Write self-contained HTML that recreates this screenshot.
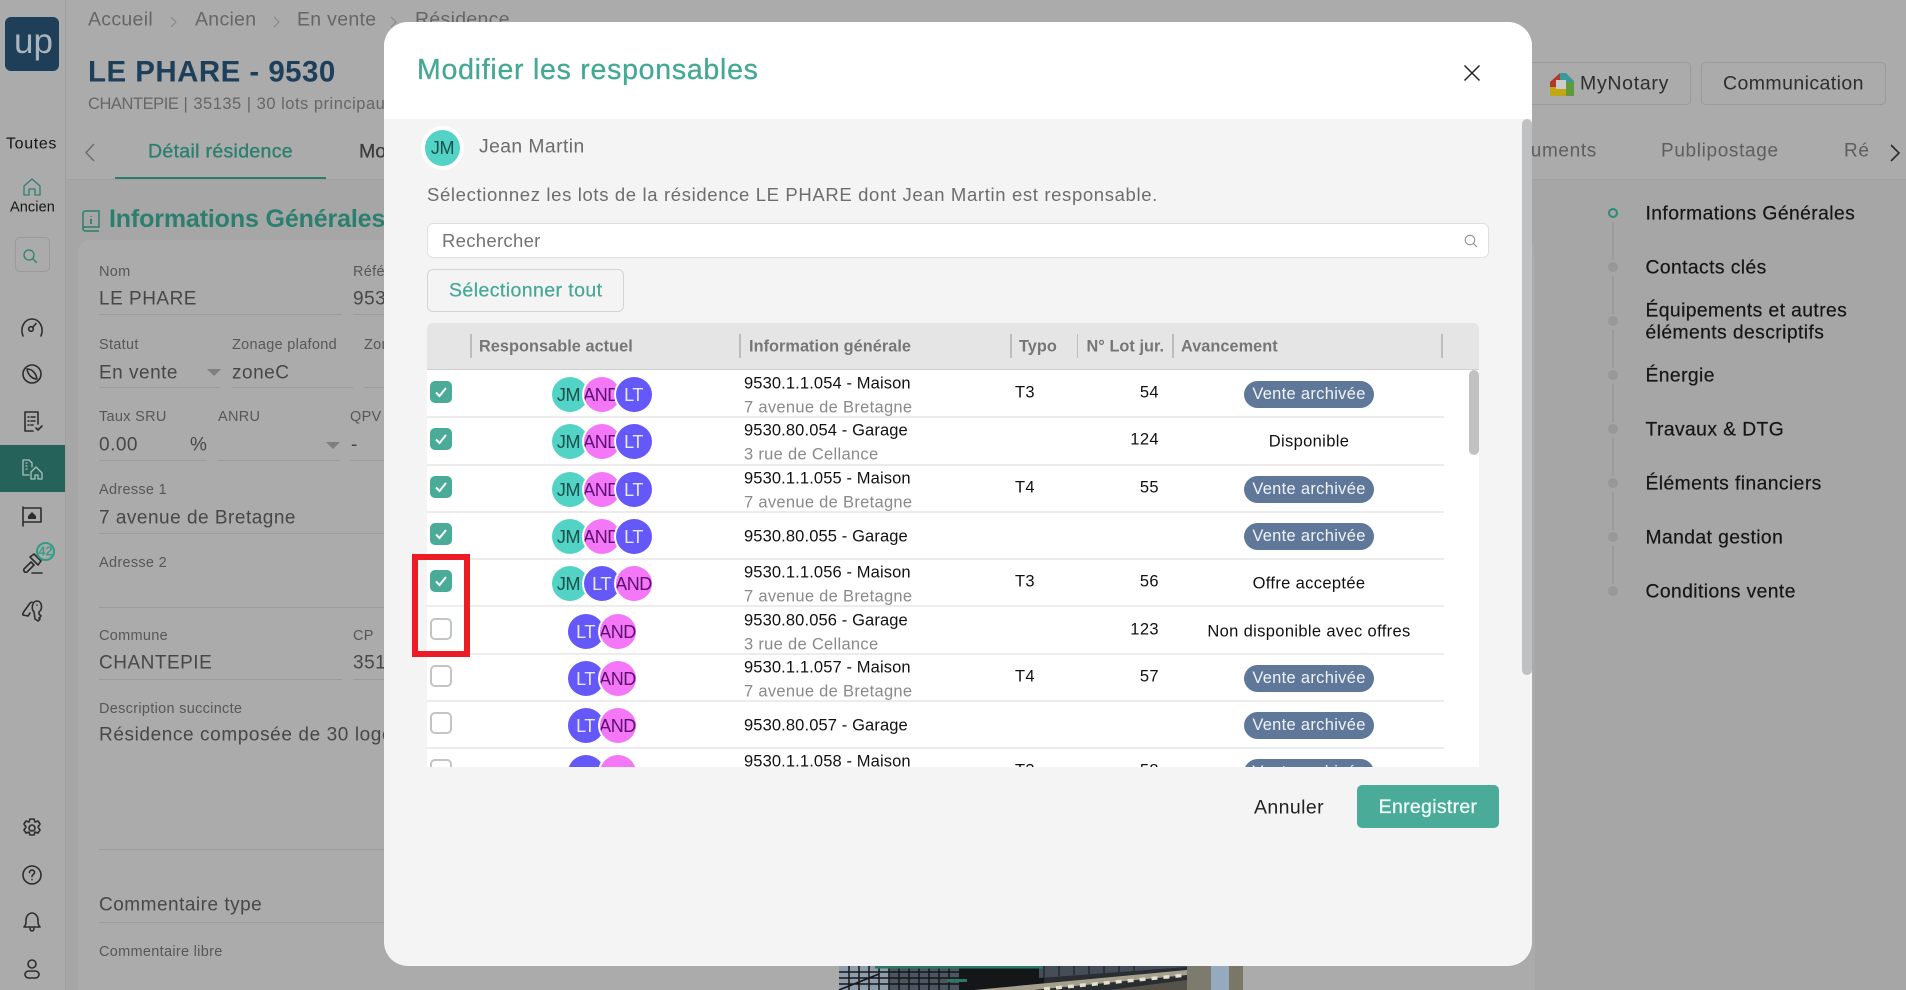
<!DOCTYPE html>
<html lang="fr"><head><meta charset="utf-8"><title>Modifier les responsables</title>
<style>
html,body{margin:0;padding:0}
body{width:1906px;height:990px;overflow:hidden;position:relative;background:#ababab;font-family:"Liberation Sans",sans-serif;color:#333}
.t{position:absolute;white-space:nowrap;transform:translateY(-50%);line-height:1.2}
.b{position:absolute}
.l{position:absolute;height:1px;background:#9c9c9c}
.lab{font-size:14.5px;color:#575757;letter-spacing:.3px;transform:translateY(calc(-50% + 1.5px))}
.val{font-size:19px;color:#474747;letter-spacing:.5px;transform:translateY(calc(-50% + 2px))}
.nav{font-size:19.3px;color:#151515;left:1645.5px;letter-spacing:.42px;-webkit-text-stroke:.2px #151515;transform:translateY(calc(-50% + 1px))}
.dot{position:absolute;left:1608px;width:10px;height:10px;border-radius:50%;background:#989898}
.vl{position:absolute;left:1612px;width:2px;height:38px;background:#9b9b9b}
svg{position:absolute;overflow:visible}
.i{fill:none;stroke:#2d2d2d;stroke-width:1.6;stroke-linecap:round;stroke-linejoin:round}
.row{position:absolute;left:0;width:1017px;height:47.3px;border-bottom:0}
.rl{position:absolute;left:0;width:1017px;height:2px;background:#ececec;bottom:-1px}
.cb{position:absolute;left:3px;width:22px;height:22px;border-radius:5px;box-sizing:border-box}
.on{background:#4aab98}
.off{background:#fff;border:2px solid #c4c4c4}
.cb svg{left:0;top:0}
.av{position:absolute;top:7px;width:36px;height:35px;border-radius:50%;box-shadow:0 0 0 2px #fff;overflow:hidden;text-align:center;line-height:36px;font-size:18px;letter-spacing:-.4px}
.jm{background:#52d3c5;color:#1a4f4b;text-indent:-3px}
.an{background:#f477f8;color:#5c0f6e;text-indent:-1px}
.lt{background:#6558f8;color:#e9e8ff;text-indent:-1px}
.m{position:absolute;left:317px;top:14px;font-size:16.5px;color:#111;white-space:nowrap;transform:translateY(-50%);letter-spacing:.12px}
.s{position:absolute;left:317px;top:38px;font-size:16.5px;color:#8a8a8a;white-space:nowrap;transform:translateY(-50%);letter-spacing:.3px}
.o{position:absolute;left:317px;top:25px;font-size:16.5px;color:#111;white-space:nowrap;transform:translateY(-50%);letter-spacing:.12px}
.ty{position:absolute;left:588px;top:23px;font-size:16.5px;color:#111;transform:translateY(-50%);letter-spacing:.3px}
.nu{position:absolute;right:285px;top:23px;font-size:16.5px;color:#111;transform:translateY(-50%);letter-spacing:.4px}
.pi{position:absolute;left:817px;top:11px;width:130px;height:27px;border-radius:14px;background:#5f7799;color:#f0f3f7;text-align:center;line-height:27.5px;font-size:16.5px;letter-spacing:.3px}
.st{position:absolute;left:717px;width:330px;top:25px;text-align:center;font-size:16.5px;color:#111;transform:translateY(-50%);letter-spacing:.35px}
.th{position:absolute;top:347px;transform:translateY(-50%);font-size:16.3px;font-weight:bold;color:#767676;white-space:nowrap;letter-spacing:.05px}
.sep{position:absolute;top:334px;width:2px;height:24px;background:#bdbdbd}
.bc{font-size:19.5px;color:#666;letter-spacing:.3px;top:20px}
</style></head><body>

<!-- background page -->
<div class="b" style="left:66px;top:180px;width:1840px;height:810px;background:#a6a6a6"></div>
<div class="b" style="left:65px;top:0;width:1px;height:990px;background:#9f9f9f"></div>
<div class="b" style="left:78px;top:240px;width:1457px;height:750px;background:#ababab;border-radius:12px 12px 0 0"></div>
<div class="b" style="left:1535px;top:180px;width:371px;height:810px;background:#a6a6a6"></div>
<div class="l" style="left:67px;top:179px;width:1839px;background:#a0a0a0"></div>

<!-- sidebar -->
<div class="b" style="left:5px;top:17px;width:54px;height:54px;border-radius:6px;background:#1f3f58"></div>
<div class="t" style="left:14px;top:42px;font-size:35px;color:#a9b5be">up</div>
<div class="t" style="left:6px;top:144px;font-size:16px;color:#161616;letter-spacing:.65px">Toutes</div>
<svg style="left:23px;top:178px" width="18" height="18" viewBox="0 0 18 18"><path class="i" style="stroke:#2f7f70;stroke-width:1.3" d="M1 8 9 1l8 7v9h-5v-6H6v6H1z"/></svg>
<div class="t" style="left:10px;top:208px;font-size:14.5px;color:#161616;letter-spacing:.1px">Ancien</div>
<div class="b" style="left:15px;top:237px;width:33px;height:33px;border:1px solid #9a9a9a;border-radius:5px"></div>
<svg style="left:22px;top:248px" width="16" height="16" viewBox="0 0 16 16"><circle cx="7" cy="7" r="5" class="i" style="stroke:#2f7f70;stroke-width:1.3"/><path class="i" style="stroke:#2f7f70;stroke-width:1.3" d="m11 11 3.500 3.500"/></svg>
<svg style="left:20px;top:317px" width="24" height="22" viewBox="0 0 24 22"><path class="i" d="M3 19C-.5 10 5 2 12 2s12.500 8 9 17"/><circle cx="11" cy="12" r="2.300" class="i"/><path class="i" d="m13 10 3-3.500"/></svg>
<svg style="left:22px;top:364px" width="20" height="20" viewBox="0 0 20 20"><circle cx="10" cy="10" r="9" class="i"/><path class="i" d="M5 5c5 0 9 4 10 10-5 0-9-4-10-10z"/></svg>
<svg style="left:24px;top:411px" width="20" height="21" viewBox="0 0 20 21"><path class="i" d="M9 20H1V1h13v12"/><path class="i" d="M4 6h1m2 0h4M4 10h1m2 0h4M4 14h1m2 0h2m3 3 2 2 4-4"/></svg>
<div class="b" style="left:0;top:445px;width:65px;height:47px;background:#25635a"></div>
<svg style="left:22px;top:459px" width="21" height="21" viewBox="0 0 21 21"><path class="i" style="stroke:#a9c1bc;stroke-width:1.3" d="M7 16H1V1h6l3 3v4m-6-4h1m-1 3h1m-1 3h1M9 20v-7l5-5 6 6v6h-4v-4h-3v4z"/></svg>
<svg style="left:22px;top:506px" width="20" height="20" viewBox="0 0 20 20"><path class="i" d="M1 20V1M1 2h18v14H1"/><path d="m6 10 4-4 4 4v3H6z" fill="#2d2d2d"/></svg>
<svg style="left:22px;top:553px" width="22" height="21" viewBox="0 0 22 21"><path class="i" d="m2 16 7-7 3 3-7 7c-2 1-4-1-3-3zM8 4l4-3 7 7-3 4zM10 20h10"/></svg>
<div class="b" style="left:36px;top:542px;width:15px;height:15px;border:2px solid #2f9a85;border-radius:50%;background:#ababab"></div>
<div class="t" style="left:38.500px;top:552px;font-size:12.500px;font-weight:bold;color:#3a9c8a">42</div>
<svg style="left:22px;top:600px" width="21" height="21" viewBox="0 0 21 21"><path class="i" d="M1 15c-1-2 3-6 5-9 1-2 3-4 4-4M1 15l5 1 2-3M12 12c-3-3-2-11 3-11s6 8 2 11v2l2 2-2 2 1 1-2 2-3-2z"/><circle cx="15" cy="5" r=".8" fill="#2d2d2d"/></svg>
<svg style="left:22px;top:818px" width="20" height="20" viewBox="0 0 20 20"><circle cx="10" cy="10" r="3" class="i"/><path class="i" d="M8 1h4l1 3 3-1 2 3-2 3 2 3-2 3-3-1-1 3H8l-1-3-3 1-2-3 2-3-2-3 2-3 3 1z"/></svg>
<svg style="left:22px;top:865px" width="20" height="20" viewBox="0 0 20 20"><circle cx="10" cy="10" r="9" class="i"/><path class="i" d="M7.500 7.500c0-3.500 5.500-3 5 .3-.3 1.700-2.500 1.500-2.500 3.700M10 14.500v.1"/></svg>
<svg style="left:23px;top:912px" width="18" height="20" viewBox="0 0 18 20"><path class="i" d="M1 15c2-2 2-4 2-7 0-4 3-7 6-7s6 3 6 7c0 3 0 5 2 7zM7 16c0 2 1 3 2 3s2-1 2-3"/></svg>
<svg style="left:24px;top:959px" width="16" height="20" viewBox="0 0 16 20"><circle cx="8" cy="5" r="4" class="i"/><rect x="1" y="12" width="14" height="7" rx="3.500" class="i"/></svg>

<!-- page header -->
<div class="t bc" style="left:88px">Accueil</div>
<svg style="left:170px;top:16px" width="7" height="12" viewBox="0 0 7 12"><path d="M1 1l5 5-5 5" fill="none" stroke="#858585" stroke-width="1"/></svg>
<div class="t bc" style="left:195px">Ancien</div>
<svg style="left:273px;top:16px" width="7" height="12" viewBox="0 0 7 12"><path d="M1 1l5 5-5 5" fill="none" stroke="#858585" stroke-width="1"/></svg>
<div class="t bc" style="left:297px">En vente</div>
<svg style="left:390px;top:16px" width="7" height="12" viewBox="0 0 7 12"><path d="M1 1l5 5-5 5" fill="none" stroke="#858585" stroke-width="1"/></svg>
<div class="t bc" style="left:415px">Résidence</div>
<div class="t" style="left:88px;top:72px;font-size:29.5px;font-weight:bold;color:#1e3f5a;letter-spacing:.45px">LE PHARE - 9530</div>
<div class="t" style="left:88px;top:104.500px;font-size:16.5px;color:#666;letter-spacing:.5px"><span style="letter-spacing:-.45px">CHANTEPIE</span>&nbsp;|&nbsp;35135&nbsp;|&nbsp;30 lots principaux</div>
<svg style="left:84px;top:143px" width="12" height="19" viewBox="0 0 12 19"><path d="M10 1 2 9.500 10 18" fill="none" stroke="#6c6c6c" stroke-width="1.500"/></svg>
<div class="t" style="left:148px;top:152px;font-size:19.5px;color:#2b7f6f;letter-spacing:.32px;-webkit-text-stroke:.35px #2b7f6f">Détail résidence</div>
<div class="b" style="left:115px;top:177px;width:211px;height:2px;background:#2b7c6b"></div>
<div class="t" style="left:359px;top:152px;font-size:19.5px;color:#3d3d3d;-webkit-text-stroke:.3px #3d3d3d">Mo</div>
<svg style="left:82px;top:210px" width="18" height="22" viewBox="0 0 18 22"><path d="M1 19V3c0-1 1-2 2-2h14v16H3c-1 0-2 1-2 2s1 2 2 2h14" fill="none" stroke="#2b7f6f" stroke-width="1.500"/><path d="M9 6v.8M9 9v5" stroke="#2b7f6f" stroke-width="1.800" fill="none"/></svg>
<div class="t" style="left:109px;top:219px;font-size:25px;font-weight:bold;color:#2b7f6f;letter-spacing:-.14px">Informations Générales</div>

<!-- form -->
<div class="t lab" style="left:99px;top:271px">Nom</div>
<div class="t val" style="left:99px;top:298px">LE PHARE</div>
<div class="l" style="left:99px;top:314px;width:243px"></div>
<div class="t lab" style="left:353px;top:271px">Référence</div>
<div class="t val" style="left:353px;top:298px">9530</div>
<div class="l" style="left:353px;top:314px;width:40px"></div>
<div class="t lab" style="left:99px;top:344px">Statut</div>
<div class="t val" style="left:99px;top:372px">En vente</div>
<div class="b" style="left:207px;top:369px;border-left:7px solid transparent;border-right:7px solid transparent;border-top:7px solid #7f7f7f"></div>
<div class="l" style="left:99px;top:387px;width:121px"></div>
<div class="t lab" style="left:232px;top:344px">Zonage plafond</div>
<div class="t val" style="left:232px;top:372px">zoneC</div>
<div class="l" style="left:232px;top:387px;width:121px"></div>
<div class="t lab" style="left:364px;top:344px">Zonage</div>
<div class="l" style="left:364px;top:387px;width:30px"></div>
<div class="t lab" style="left:99px;top:416px">Taux SRU</div>
<div class="t val" style="left:99px;top:444px">0.00</div>
<div class="t val" style="left:190px;top:444px">%</div>
<div class="l" style="left:99px;top:460px;width:108px"></div>
<div class="t lab" style="left:218px;top:416px">ANRU</div>
<div class="b" style="left:326px;top:442px;border-left:7px solid transparent;border-right:7px solid transparent;border-top:7px solid #7f7f7f"></div>
<div class="l" style="left:218px;top:460px;width:122px"></div>
<div class="t lab" style="left:350px;top:416px">QPV</div>
<div class="t val" style="left:351px;top:444px">-</div>
<div class="l" style="left:350px;top:460px;width:40px"></div>
<div class="t lab" style="left:99px;top:489px">Adresse 1</div>
<div class="t val" style="left:99px;top:517px">7 avenue de Bretagne</div>
<div class="l" style="left:99px;top:533px;width:290px"></div>
<div class="t lab" style="left:99px;top:562px">Adresse 2</div>
<div class="l" style="left:99px;top:607px;width:290px"></div>
<div class="t lab" style="left:99px;top:635px">Commune</div>
<div class="t val" style="left:99px;top:662px">CHANTEPIE</div>
<div class="l" style="left:99px;top:679px;width:243px"></div>
<div class="t lab" style="left:353px;top:635px">CP</div>
<div class="t val" style="left:353px;top:662px">35135</div>
<div class="l" style="left:353px;top:679px;width:40px"></div>
<div class="t lab" style="left:99px;top:708px">Description succincte</div>
<div class="t val" style="left:99px;top:734px;letter-spacing:.6px">Résidence composée de 30 logements</div>
<div class="l" style="left:99px;top:849px;width:290px"></div>
<div class="t val" style="left:99px;top:903.500px">Commentaire type</div>
<div class="l" style="left:99px;top:922px;width:290px"></div>
<div class="t lab" style="left:99px;top:951px">Commentaire libre</div>

<!-- photo -->
<svg style="left:839px;top:966px" width="404" height="24" viewBox="0 0 404 24">
<rect width="404" height="24" fill="#2a2d31"/>
<rect width="50" height="24" fill="#8f9cac"/>
<rect x="50" width="70" height="24" fill="#4d5660"/>
<path d="M0 24 40 8M0 12h120M10 0v24M20 0v24M30 0v24M40 0v24M50 0v24M60 0v24M70 0v24M80 0v24M90 0v24M100 0v24M110 0v24M0 18h120M0 6h120" stroke="#15171a" stroke-width="1.500"/>
<rect x="120" width="85" height="24" fill="#141618"/>
<path d="M200 0h148v1L200 12z" fill="#454e58"/>
<path d="M205 0v12M220 0v10M235 0v9M250 0v8M265 0v7M280 0v6M295 0v5" stroke="#15171a"/>
<path d="M135 24 348 4v5L195 24z" fill="#a5a08e"/>
<path d="M205 23 348 9" stroke="#e5e0cf" stroke-width="3.500" stroke-dasharray="6 6"/>
<path d="M270 24 348 14v10z" fill="#55524a"/>
<rect x="348" width="24" height="24" fill="#7d7b6e"/>
<rect x="372" width="18" height="24" fill="#95a9bf"/>
<rect x="390" width="14" height="24" fill="#7a7767"/>
<rect x="36" width="168" height="2.500" fill="#2a7a67"/>
<rect x="108" y="13" width="20" height="3" fill="#2a7a67"/>
</svg>

<!-- right top buttons -->
<div class="b" style="left:1500px;top:62px;width:189px;height:41px;border:1px solid #9a9a9a;border-radius:5px"></div>
<svg style="left:1550px;top:72px" width="24" height="24" viewBox="0 0 24 24">
<path d="M0 10 10 1v7H6v7H0z" fill="#b03a2c"/>
<path d="M10 1h6l8 8v1H16V8h-6z" fill="#3a9a99"/>
<path d="M16 10h8v14h-8v-7z" fill="#5f9a3c" />
<path d="M0 15h6v2h10v7H0z" fill="#c2a715"/>
<rect x="6" y="8" width="10" height="9" fill="#ccc"/>
</svg>
<div class="t" style="left:1580px;top:84px;font-size:19.5px;color:#2e2e2e;letter-spacing:.7px">MyNotary</div>
<div class="b" style="left:1701px;top:62px;width:183px;height:41px;border:1px solid #9a9a9a;border-radius:5px"></div>
<div class="t" style="left:1723px;top:84px;font-size:19.5px;color:#2e2e2e;letter-spacing:.42px">Communication</div>
<div class="t" style="left:1495px;top:152px;font-size:19px;color:#5e5e5e;letter-spacing:.65px">Documents</div>
<div class="t" style="left:1661px;top:152px;font-size:19px;color:#5e5e5e;letter-spacing:.65px">Publipostage</div>
<div class="b" style="left:1844px;top:135px;width:25px;height:30px;overflow:hidden"><div class="t" style="left:0;top:17px;font-size:19px;color:#5e5e5e;letter-spacing:.65px">Réalisation</div></div>
<svg style="left:1890px;top:144px" width="11" height="18" viewBox="0 0 11 18"><path d="M1 1l8 8-8 8" fill="none" stroke="#2b2b2b" stroke-width="1.600"/></svg>

<!-- section nav -->
<div class="b" style="left:1608px;top:208px;width:6px;height:6px;border:2px solid #2b8a78;border-radius:50%;background:#a6a6a6"></div>
<div class="vl" style="top:222px"></div><div class="vl" style="top:276px"></div><div class="vl" style="top:330px"></div><div class="vl" style="top:384px"></div><div class="vl" style="top:438px"></div><div class="vl" style="top:492px"></div><div class="vl" style="top:546px"></div>
<div class="dot" style="top:262px"></div><div class="dot" style="top:316px"></div><div class="dot" style="top:370px"></div><div class="dot" style="top:424px"></div><div class="dot" style="top:478px"></div><div class="dot" style="top:532px"></div><div class="dot" style="top:586px"></div>
<div class="t nav" style="top:213px">Informations Générales</div>
<div class="t nav" style="top:267px">Contacts clés</div>
<div class="t nav" style="top:310px">Équipements et autres</div>
<div class="t nav" style="top:332px">éléments descriptifs</div>
<div class="t nav" style="top:375px">Énergie</div>
<div class="t nav" style="top:429px">Travaux &amp; DTG</div>
<div class="t nav" style="top:483px">Éléments financiers</div>
<div class="t nav" style="top:537px">Mandat gestion</div>
<div class="t nav" style="top:591px">Conditions vente</div>

<!-- modal -->
<div class="b" style="left:384px;top:22px;width:1148px;height:944px;background:#f4f4f4;border-radius:24px;overflow:hidden">
 <div class="b" style="left:0;top:0;width:1148px;height:97px;background:#fff"></div>
 <div class="b" style="left:1138px;top:97px;width:10px;height:556px;background:#bfc0c2;border-radius:5px"></div>
</div>
<div class="t" style="left:417px;top:69.500px;font-size:28.500px;color:#45a895;letter-spacing:.74px;-webkit-text-stroke:.3px #45a895">Modifier les responsables</div>
<svg style="left:1464px;top:65px" width="16" height="16" viewBox="0 0 16 16"><path d="M.5.500l15 15m0-15-15 15" stroke="#222" stroke-width="1.500" fill="none"/></svg>
<div class="b" style="left:425px;top:130px;width:35px;height:36px;border-radius:50%;background:#52d3c5;box-shadow:0 0 0 4px #fff;text-align:center;line-height:37px;font-size:18px;color:#1a4f4b;letter-spacing:-.4px">JM</div>
<div class="t" style="left:479px;top:147px;font-size:19.300px;color:#6b6b6b;letter-spacing:.45px">Jean Martin</div>
<div class="t" style="left:427px;top:195px;font-size:18.500px;color:#6d6d6d;letter-spacing:.64px">Sélectionnez les lots de la résidence LE PHARE dont Jean Martin est responsable.</div>
<div class="b" style="left:427px;top:223px;width:1060px;height:33px;background:#fff;border:1px solid #e0e0e0;border-radius:6px"></div>
<div class="t" style="left:442px;top:241px;font-size:18.500px;color:#737373;letter-spacing:.3px">Rechercher</div>
<svg style="left:1464px;top:234px" width="14" height="14" viewBox="0 0 14 14"><circle cx="6" cy="6" r="4.800" fill="none" stroke="#8a8a8a" stroke-width="1"/><path d="m9.500 9.500 3.500 3.500" stroke="#8a8a8a" stroke-width="1"/></svg>
<div class="b" style="left:427px;top:269px;width:195px;height:41px;background:#f4f4f4;border:1px solid #d4d4d4;border-radius:6px"></div>
<div class="t" style="left:449px;top:291px;font-size:19.500px;color:#45a895;letter-spacing:.42px;-webkit-text-stroke:.25px #45a895">Sélectionner tout</div>

<!-- table header -->
<div class="b" style="left:427px;top:323px;width:1052px;height:47px;background:#e5e5e5;border-radius:6px 6px 0 0;box-sizing:border-box;border-bottom:1px solid #cfcfcf"></div>
<div class="sep" style="left:470px"></div><div class="sep" style="left:739px"></div><div class="sep" style="left:1010px"></div><div class="sep" style="left:1077px;width:1px"></div><div class="sep" style="left:1172px"></div><div class="sep" style="left:1441px"></div>
<div class="th" style="left:479px">Responsable actuel</div>
<div class="th" style="left:749px">Information générale</div>
<div class="th" style="left:1019px">Typo</div>
<div class="th" style="left:1086.500px">N° Lot jur.</div>
<div class="th" style="left:1181px">Avancement</div>

<!-- table body -->
<div class="b" style="left:427px;top:370px;width:1052px;height:396.500px;background:#fff;overflow:hidden">
 <div class="b" style="left:1042px;top:0;width:10px;height:85px;background:#c1c1c1;border-radius:5px"></div>

 <div class="row" style="top:0"><div class="rl"></div><div class="cb on" style="top:11px"><svg width="22" height="22" viewBox="0 0 22 22"><path d="m6 11.500 3.500 3.500 6.500-8" stroke="#fff" stroke-width="2" fill="none"/></svg></div><div class="av jm" style="left:125px">JM</div><div class="av an" style="left:157px">AND</div><div class="av lt" style="left:189px">LT</div><div class="m">9530.1.1.054 - Maison</div><div class="s">7 avenue de Bretagne</div><div class="ty">T3</div><div class="nu">54</div><div class="pi">Vente archivée</div></div>

 <div class="row" style="top:47.300px"><div class="rl"></div><div class="cb on" style="top:11px"><svg width="22" height="22" viewBox="0 0 22 22"><path d="m6 11.500 3.500 3.500 6.500-8" stroke="#fff" stroke-width="2" fill="none"/></svg></div><div class="av jm" style="left:125px">JM</div><div class="av an" style="left:157px">AND</div><div class="av lt" style="left:189px">LT</div><div class="m">9530.80.054 - Garage</div><div class="s">3 rue de Cellance</div><div class="nu">124</div><div class="st">Disponible</div></div>

 <div class="row" style="top:94.600px"><div class="rl"></div><div class="cb on" style="top:11px"><svg width="22" height="22" viewBox="0 0 22 22"><path d="m6 11.500 3.500 3.500 6.500-8" stroke="#fff" stroke-width="2" fill="none"/></svg></div><div class="av jm" style="left:125px">JM</div><div class="av an" style="left:157px">AND</div><div class="av lt" style="left:189px">LT</div><div class="m">9530.1.1.055 - Maison</div><div class="s">7 avenue de Bretagne</div><div class="ty">T4</div><div class="nu">55</div><div class="pi">Vente archivée</div></div>

 <div class="row" style="top:141.900px"><div class="rl"></div><div class="cb on" style="top:11px"><svg width="22" height="22" viewBox="0 0 22 22"><path d="m6 11.500 3.500 3.500 6.500-8" stroke="#fff" stroke-width="2" fill="none"/></svg></div><div class="av jm" style="left:125px">JM</div><div class="av an" style="left:157px">AND</div><div class="av lt" style="left:189px">LT</div><div class="o">9530.80.055 - Garage</div><div class="pi">Vente archivée</div></div>

 <div class="row" style="top:189.200px"><div class="rl"></div><div class="cb on" style="top:11px"><svg width="22" height="22" viewBox="0 0 22 22"><path d="m6 11.500 3.500 3.500 6.500-8" stroke="#fff" stroke-width="2" fill="none"/></svg></div><div class="av jm" style="left:125px">JM</div><div class="av lt" style="left:157px">LT</div><div class="av an" style="left:189px">AND</div><div class="m">9530.1.1.056 - Maison</div><div class="s">7 avenue de Bretagne</div><div class="ty">T3</div><div class="nu">56</div><div class="st">Offre acceptée</div></div>

 <div class="row" style="top:236.500px"><div class="rl"></div><div class="cb off" style="top:11px"></div><div class="av lt" style="left:141px">LT</div><div class="av an" style="left:173px">AND</div><div class="m">9530.80.056 - Garage</div><div class="s">3 rue de Cellance</div><div class="nu">123</div><div class="st">Non disponible avec offres</div></div>

 <div class="row" style="top:283.800px"><div class="rl"></div><div class="cb off" style="top:11px"></div><div class="av lt" style="left:141px">LT</div><div class="av an" style="left:173px">AND</div><div class="m">9530.1.1.057 - Maison</div><div class="s">7 avenue de Bretagne</div><div class="ty">T4</div><div class="nu">57</div><div class="pi">Vente archivée</div></div>

 <div class="row" style="top:331.100px"><div class="rl"></div><div class="cb off" style="top:11px"></div><div class="av lt" style="left:141px">LT</div><div class="av an" style="left:173px">AND</div><div class="o">9530.80.057 - Garage</div><div class="pi">Vente archivée</div></div>

 <div class="row" style="top:378.400px"><div class="cb off" style="top:11px"></div><div class="av lt" style="left:141px;line-height:44px">LT</div><div class="av an" style="left:173px;line-height:44px">AND</div><div class="m">9530.1.1.058 - Maison</div><div class="s">7 avenue de Bretagne</div><div class="ty">T3</div><div class="nu">58</div><div class="pi">Vente archivée</div></div>
</div>

<!-- red annotation -->
<div class="b" style="left:411.500px;top:554px;width:46px;height:91px;border:6px solid #ed1c24"></div>

<!-- footer -->
<div class="t" style="left:1254px;top:807.500px;font-size:19.500px;color:#222;letter-spacing:.4px">Annuler</div>
<div class="b" style="left:1357px;top:785px;width:142px;height:43px;background:#4aab98;border-radius:5px;text-align:center;line-height:44px;font-size:19.500px;color:#f2fbf9;letter-spacing:.3px;-webkit-text-stroke:.25px #f2fbf9">Enregistrer</div>
</body></html>
